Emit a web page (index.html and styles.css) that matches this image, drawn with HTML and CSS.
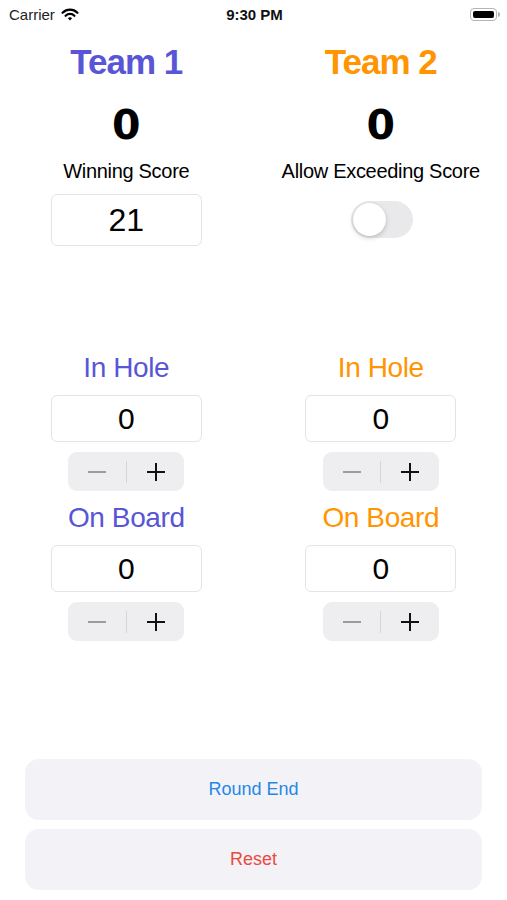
FILE: index.html
```html
<!DOCTYPE html>
<html lang="en">

<head>
    <meta charset="UTF-8">
    <meta name="viewport" content="width=device-width, initial-scale=1.0">
    <title>Score Keeper</title>
    <link rel="stylesheet" href="styles.css">
</head>

<body>
    <div class="page">
        <!-- status bar -->
        <div class="status">
            <div class="carrier">
                <span>Carrier</span>
                <svg class="wifi" width="18" height="13" viewBox="0 0 18 13">
                    <path d="M1.6 4.8a10.4 10.4 0 0 1 14.8 0" fill="none" stroke="#000" stroke-width="2.3" stroke-linecap="round" />
                    <path d="M4.6 7.8a6.2 6.2 0 0 1 8.8 0" fill="none" stroke="#000" stroke-width="2.3" stroke-linecap="round" />
                    <path d="M6.9 10.3a3 3 0 0 1 4.2 0L9 12.5z" fill="#000" />
                </svg>
            </div>
            <div class="time">9:30 PM</div>
            <div class="battery">
                <div class="battery-body"><div class="battery-fill"></div></div>
                <div class="battery-nub"></div>
            </div>
        </div>

        <!-- teams -->
        <div class="teams">
            <div class="team">
                <h1 class="team-name team1">Team 1</h1>
                <div class="score">0</div>
                <div class="caption">Winning Score</div>
                <div class="field field-big">21</div>
            </div>
            <div class="team">
                <h1 class="team-name team2">Team 2</h1>
                <div class="score">0</div>
                <div class="caption">Allow Exceeding Score</div>
                <div class="toggle"></div>
            </div>
        </div>

        <!-- counters -->
        <div class="counters">
            <div class="team">
                <div class="counter-label team1">In Hole</div>
                <div class="field">0</div>
                <div class="stepper">
                    <button class="step minus"></button>
                    <span class="divider"></span>
                    <button class="step plus"></button>
                </div>
                <div class="counter-label team1">On Board</div>
                <div class="field">0</div>
                <div class="stepper">
                    <button class="step minus"></button>
                    <span class="divider"></span>
                    <button class="step plus"></button>
                </div>
            </div>
            <div class="team">
                <div class="counter-label team2">In Hole</div>
                <div class="field">0</div>
                <div class="stepper">
                    <button class="step minus"></button>
                    <span class="divider"></span>
                    <button class="step plus"></button>
                </div>
                <div class="counter-label team2">On Board</div>
                <div class="field">0</div>
                <div class="stepper">
                    <button class="step minus"></button>
                    <span class="divider"></span>
                    <button class="step plus"></button>
                </div>
            </div>
        </div>

        <!-- actions -->
        <div class="actions">
            <button class="action round-end">Round End</button>
            <button class="action reset">Reset</button>
        </div>
    </div>
</body>

</html>
```

FILE: styles.css
```css
* {
    padding: 0;
    margin: 0;
    box-sizing: border-box;
}

body {
    font-family: "Liberation Sans", Arial, sans-serif;
    color: #000;
    background-color: #fff;
}

.page {
    display: flex;
    flex-direction: column;
    min-height: 900px;
}

/* status bar */
.status {
    display: grid;
    grid-template-columns: 1fr auto 1fr;
    align-items: center;
    height: 28px;
    padding: 0 7px 0 9px;
    font-size: 15px;
}

.carrier {
    display: flex;
    align-items: center;
    gap: 6px;
    color: #222;
}

.time {
    font-weight: bold;
    color: #111;
}

.battery {
    display: flex;
    align-items: center;
    justify-content: flex-end;
}

.battery-body {
    width: 27px;
    height: 13px;
    padding: 2px;
    border: 1px solid #b5b5b5;
    border-radius: 4px;
}

.battery-fill {
    width: 100%;
    height: 100%;
    background-color: #000;
    border-radius: 2px;
}

.battery-nub {
    width: 2px;
    height: 5px;
    margin-left: 1px;
    background-color: #b5b5b5;
    border-radius: 0 2px 2px 0;
}

/* teams */
.teams,
.counters {
    display: grid;
    grid-template-columns: 1fr 1fr;
    column-gap: 2px;
}

.teams {
    margin-top: 14px;
}

.team {
    display: flex;
    flex-direction: column;
    align-items: center;
}

.team1 {
    color: #5856d6;
}

.team2 {
    color: #ff9500;
}

.team-name {
    font-size: 35px;
    font-weight: bold;
    line-height: 40px;
    letter-spacing: -1px;
}

.score {
    margin-top: 19px;
    font-family: "DejaVu Sans", "Liberation Sans", sans-serif;
    font-size: 41px;
    font-weight: bold;
    line-height: 48px;
}

.caption {
    margin-top: 10px;
    font-size: 20px;
    line-height: 24px;
    letter-spacing: -0.3px;
}

.field {
    display: flex;
    justify-content: center;
    align-items: center;
    width: 151px;
    height: 47px;
    margin-top: 10px;
    border: 1px solid #e4e4e8;
    border-radius: 6px;
    font-size: 30px;
}

.field-big {
    height: 52px;
    margin-top: 11px;
    font-size: 32px;
}

.toggle {
    position: relative;
    width: 62px;
    height: 37px;
    margin-top: 18px;
    margin-left: 2px;
    border-radius: 19px;
    background-color: #e9e9eb;
}

.toggle::after {
    content: "";
    position: absolute;
    top: 2px;
    left: 2px;
    width: 33px;
    height: 33px;
    border-radius: 50%;
    background-color: #fff;
    box-shadow: 0 2px 5px rgba(0, 0, 0, 0.18), 0 0 1px rgba(0, 0, 0, 0.12);
}

/* counters */
.counters {
    margin-top: 105px;
}

.counter-label {
    font-size: 28px;
    line-height: 34px;
    letter-spacing: -0.4px;
}

.stepper + .counter-label {
    margin-top: 10px;
}

.stepper {
    display: flex;
    align-items: center;
    width: 116px;
    height: 39px;
    margin-top: 10px;
    border-radius: 9px;
    background-color: #eeeef0;
}

.step {
    position: relative;
    flex: 1;
    height: 100%;
    border: none;
    background: none;
}

.step::before,
.step::after {
    content: "";
    position: absolute;
    top: 50%;
    left: 50%;
    background-color: #111;
}

.step::before {
    width: 18px;
    height: 2px;
    margin: -1px 0 0 -9px;
}

.minus::before {
    background-color: #9c9ca0;
}

.minus::after {
    display: none;
}

.plus::after {
    width: 2px;
    height: 18px;
    margin: -9px 0 0 -1px;
}

.divider {
    width: 1px;
    height: 22px;
    background-color: #d6d6da;
}

/* actions */
.actions {
    display: flex;
    flex-direction: column;
    gap: 9px;
    margin-top: auto;
    padding: 0 25px 10px;
}

.action {
    height: 61px;
    border: none;
    border-radius: 14px;
    background-color: #f2f2f7;
    font-family: inherit;
    font-size: 18px;
}

.round-end {
    color: #1f88e8;
}

.reset {
    color: #ea4a3f;
}
```
